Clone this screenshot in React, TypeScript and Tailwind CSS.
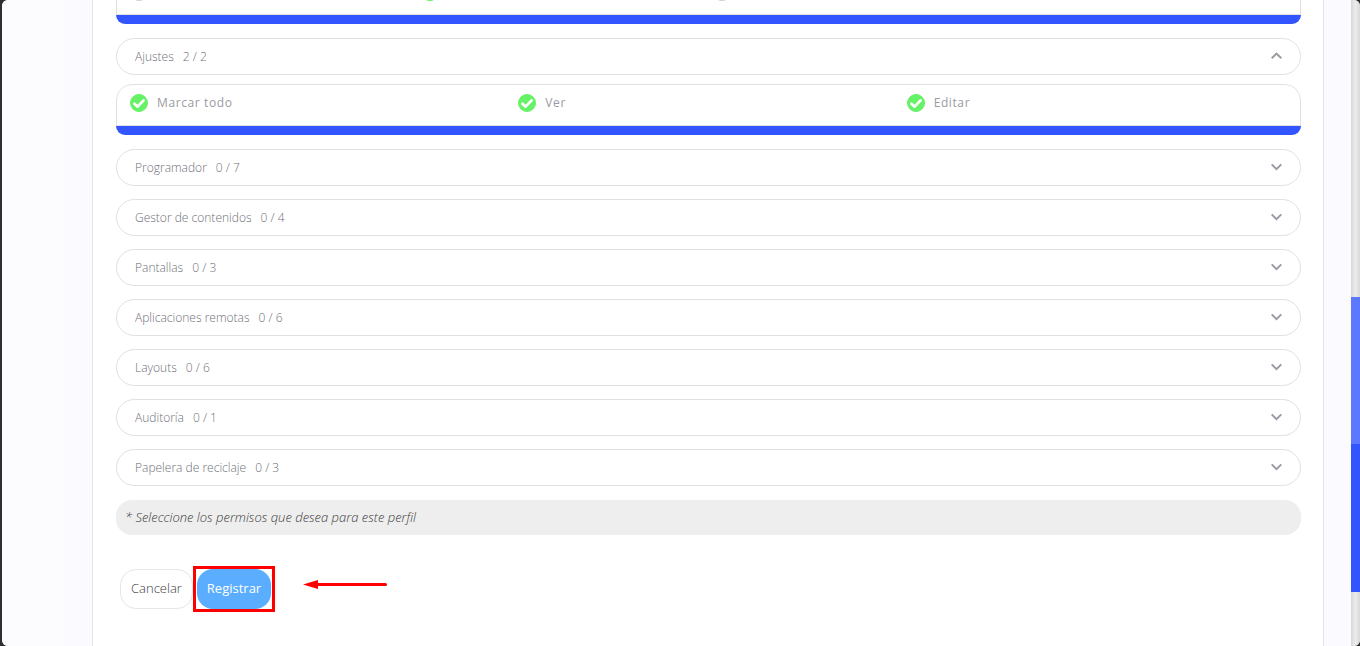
import { useState } from "react";

type Option = { label: string; checked: boolean; hideText?: boolean };

function Check({ label, checked, hideText }: Option) {
  const [on, setOn] = useState(checked);
  return (
    <label className="flex items-center gap-[9px] text-xs leading-[18px] tracking-wider text-[#9a9aa2]">
      <span className="grid size-[18px]">
        <input
          type="checkbox"
          aria-label={label}
          checked={on}
          onChange={() => setOn(!on)}
          className="col-start-1 row-start-1 size-[18px] appearance-none rounded-full border border-[#cfcfcf] bg-[#e0e0e0] checked:border-[#66f266] checked:bg-[#66f266]"
        />
        {on && (
          <svg viewBox="0 0 18 18" className="pointer-events-none col-start-1 row-start-1 size-[18px]" fill="none" stroke="#fff" strokeWidth="2.8" strokeLinecap="round" strokeLinejoin="round">
            <path d="M4.4 9.8 7.6 12.6 13.6 6.4" />
          </svg>
        )}
      </span>
      {!hideText && label}
    </label>
  );
}

function Panel({ columns, options }: { columns: string; options: Option[] }) {
  return (
    <div className="overflow-hidden rounded-t-2xl rounded-b-[9px]">
      <div className={"grid h-[42px] items-start rounded-t-2xl border border-[#e0e0e0] pt-[9px] pr-[5px] pl-[13px] " + columns}>
        {options.map((o) => (
          <Check key={o.label} {...o} />
        ))}
      </div>
      <div className="h-[9px] bg-[#3355ff]" />
    </div>
  );
}

function Row({ name, count, open = false }: { name: string; count: string; open?: boolean }) {
  return (
    <button
      type="button"
      aria-expanded={open}
      className="flex h-[37px] w-full items-center rounded-full border border-[#e0e0e0] bg-white pr-[18px] pl-[18px] text-left text-xs font-light text-[#6f6f78]"
    >
      <span>{name}</span>
      <span className="ml-[9px]">{count}</span>
      <svg viewBox="0 0 12 10" className="ml-auto h-2.5 w-3" fill="none" stroke="#9a9aa2" strokeWidth="2">
        <path d={open ? "M1.7 6.3 6.5 1.6 11.3 6.3" : "M1.7 1.4 6.5 6.1 11.3 1.4"} />
      </svg>
    </button>
  );
}

const sections = [
  { name: "Programador", count: "0 / 7" },
  { name: "Gestor de contenidos", count: "0 / 4" },
  { name: "Pantallas", count: "0 / 3" },
  { name: "Aplicaciones remotas", count: "0 / 6" },
  { name: "Layouts", count: "0 / 6" },
  { name: "Auditoría", count: "0 / 1" },
  { name: "Papelera de reciclaje", count: "0 / 3" },
];

export default function App() {
  return (
    <div className="flex h-screen overflow-hidden bg-[#2f2f2f] pl-0.5 font-['Open_Sans',sans-serif]">
      <div className="flex min-w-0 flex-1 overflow-hidden rounded-[6px] bg-[#e9e9e9]">
        <div className="w-[63px] shrink-0 bg-[#fcfcff]" />
        <div className="flex min-w-0 flex-1 bg-[#fafaff] pr-[27px] pl-[27px]">
          <main className="min-w-0 flex-1 border-x border-[#e4e4e9] bg-white pr-[22px] pl-[23px]">
            <div className="-mt-[27px]">
              <Panel
                columns="grid-cols-4"
                options={[
                  { label: "Marcar todo", checked: false, hideText: true },
                  { label: "Ver", checked: true, hideText: true },
                  { label: "Editar", checked: false, hideText: true },
                ]}
              />
            </div>
            <div className="mt-3.5 mb-[9px]">
              <Row name="Ajustes" count="2 / 2" open />
            </div>
            <Panel
              columns="grid-cols-3"
              options={[
                { label: "Marcar todo", checked: true },
                { label: "Ver", checked: true },
                { label: "Editar", checked: true },
              ]}
            />
            <div className="mt-3.5 flex flex-col gap-[13px]">
              {sections.map((s) => (
                <Row key={s.name} {...s} />
              ))}
            </div>
            <p className="mt-3.5 rounded-2xl bg-[#eeeeee] px-[9px] text-[13px] leading-[35px] font-light text-[#3c3c40] italic">
              * Seleccione los permisos que desea para este perfil
            </p>
            <div className="mt-[31px] ml-1 flex items-center">
              <button type="button" className="h-10 rounded-2xl border border-[#e6e6ea] px-2.5 text-[13px] font-light text-[#3c3c40]">
                Cancelar
              </button>
              <div className="border-[3px] border-[#ff0000] px-px">
                <button type="button" className="block h-10 rounded-2xl bg-[#5badff] px-2.5 text-[13px] text-white">
                  Registrar
                </button>
              </div>
              <svg viewBox="0 0 86 12" className="mt-3 ml-[27px] h-3 w-[86px] self-start">
                <path d="M1 6.5 16 2V11Z" fill="#ff0000" />
                <path d="M14 6.5H83.5" stroke="#ff0000" strokeWidth="3" strokeLinecap="round" />
              </svg>
            </div>
          </main>
        </div>
        <div className="flex w-[9px] shrink-0 flex-col bg-linear-to-r from-[#d8d8d8] via-[#ececec] to-[#d8d8d8]">
          <div className="flex-[297]" />
          <div className="flex-[147] bg-[#5c78ff]" />
          <div className="flex-[148] bg-[#3355ff]" />
          <div className="flex-[54]" />
        </div>
      </div>
    </div>
  );
}
